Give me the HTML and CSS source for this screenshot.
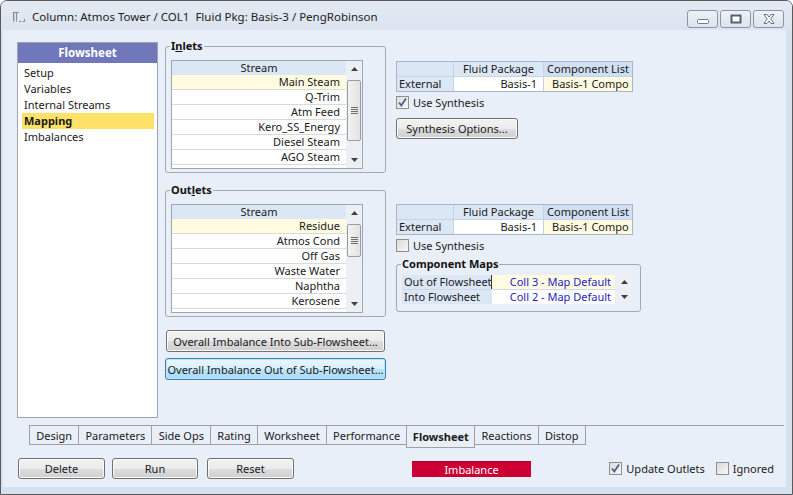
FILE: index.html
```html
<!DOCTYPE html>
<html>
<head>
<meta charset="utf-8">
<title>Column: Atmos Tower</title>
<link rel="stylesheet" href="styles.css">
</head>
<body>
<div class="window">
  <div class="titlebar">
    <svg class="app-icon" width="14" height="12" viewBox="0 0 14 12">
      <path d="M1.5 1 V10.5 M4.5 1 V10.5 M1.5 1.5 H4.5 M4.5 1.5 H7" stroke="#8a8a8a" stroke-width="1" fill="none"/>
      <path d="M7 10.5 H9 M10.5 10.5 H12.5 M12.5 8 V10.5" stroke="#8a8a8a" stroke-width="1" fill="none"/>
      <path d="M2.5 2 V10" stroke="#c8c8c8" stroke-width="1"/>
    </svg>
    <span class="title">Column: Atmos Tower / COL1&nbsp; Fluid Pkg: Basis-3 / PengRobinson</span>
    <div class="wbtns">
      <div class="wbtn"><svg width="12" height="12" viewBox="0 0 12 12"><rect x="0.5" y="6.5" width="11" height="4" rx="1" fill="#fff" stroke="#707a88"/></svg></div>
      <div class="wbtn"><svg width="12" height="10" viewBox="0 0 12 10"><rect x="1.5" y="1.5" width="9" height="7" fill="#fff" stroke="#5b6370" stroke-width="2"/><rect x="3.5" y="4" width="5" height="2" fill="#fff"/></svg></div>
      <div class="wbtn"><svg width="14" height="12" viewBox="0 0 14 12"><path d="M2 1.5 L5 1.5 L7 4 L9 1.5 L12 1.5 L8.8 6 L12 10.5 L9 10.5 L7 8 L5 10.5 L2 10.5 L5.2 6 Z" fill="#fff" stroke="#6c7482" stroke-width="1" stroke-linejoin="round"/></svg></div>
    </div>
  </div>

  <div class="client">
    <div class="main">
      <div class="nav">
        <div class="nav-head">Flowsheet</div>
        <ul class="nav-list">
          <li>Setup</li>
          <li>Variables</li>
          <li>Internal Streams</li>
          <li class="current">Mapping</li>
          <li>Imbalances</li>
        </ul>
      </div>

      <div class="page">
        <div class="section">
          <fieldset class="group streams">
            <legend>I<u>n</u>lets</legend>
            <div class="grid">
              <div class="grid-body">
                <div class="ghead">Stream</div>
                <div class="grow sel">Main Steam</div>
                <div class="grow">Q-Trim</div>
                <div class="grow">Atm Feed</div>
                <div class="grow">Kero_SS_Energy</div>
                <div class="grow">Diesel Steam</div>
                <div class="grow">AGO Steam</div>
              </div>
              <div class="vscroll">
                <div class="sarrow"><svg width="7" height="4" viewBox="0 0 7 4"><path d="M0 4 L3.5 0 L7 4 Z" fill="#404040"/></svg></div>
                <div class="strack"><div class="sthumb"><span class="grip"></span></div></div>
                <div class="sarrow"><svg width="7" height="4" viewBox="0 0 7 4"><path d="M0 0 L3.5 4 L7 0 Z" fill="#404040"/></svg></div>
              </div>
            </div>
          </fieldset>
          <div class="side side-in">
            <div class="pkg">
              <div class="pc"></div>
              <div class="pc ctr">Fluid Package</div>
              <div class="pc ctr cl">Component List</div>
              <div class="pc">External</div>
              <div class="pc num">Basis-1</div>
              <div class="pc cream">Basis-1 Compo</div>
            </div>
            <label class="chk"><span class="box"><svg width="11" height="11" viewBox="0 0 11 11"><path d="M2 5.5 L4.3 8.5 L9 1.5" stroke="#4b5f8c" stroke-width="1.8" fill="none"/></svg></span>Use Synthesis</label>
            <button class="btn syn">Synthesis Options...</button>
          </div>
        </div>

        <div class="section outlets">
          <fieldset class="group streams">
            <legend>Out<u>l</u>ets</legend>
            <div class="grid">
              <div class="grid-body">
                <div class="ghead">Stream</div>
                <div class="grow sel">Residue</div>
                <div class="grow">Atmos Cond</div>
                <div class="grow">Off Gas</div>
                <div class="grow">Waste Water</div>
                <div class="grow">Naphtha</div>
                <div class="grow">Kerosene</div>
              </div>
              <div class="vscroll">
                <div class="sarrow"><svg width="7" height="4" viewBox="0 0 7 4"><path d="M0 4 L3.5 0 L7 4 Z" fill="#404040"/></svg></div>
                <div class="strack"><div class="sthumb short"><span class="grip"></span></div></div>
                <div class="sarrow"><svg width="7" height="4" viewBox="0 0 7 4"><path d="M0 0 L3.5 4 L7 0 Z" fill="#404040"/></svg></div>
              </div>
            </div>
          </fieldset>
          <div class="side side-out">
            <div class="pkg">
              <div class="pc"></div>
              <div class="pc ctr">Fluid Package</div>
              <div class="pc ctr cl">Component List</div>
              <div class="pc">External</div>
              <div class="pc num">Basis-1</div>
              <div class="pc cream">Basis-1 Compo</div>
            </div>
            <label class="chk"><span class="box"></span>Use Synthesis</label>
            <fieldset class="group maps">
              <legend>Component Maps</legend>
              <div class="mapgrid">
                <div class="mapcells">
                  <div class="mrow"><span class="mlabel focus">Out of Flowsheet</span><span class="mval cream">Coll 3 - Map Default</span></div>
                  <div class="mrow"><span class="mlabel">Into Flowsheet</span><span class="mval">Coll 2 - Map Default</span></div>
                </div>
                <div class="mscroll">
                  <div class="marrow"><svg width="7" height="4" viewBox="0 0 7 4"><path d="M0 4 L3.5 0 L7 4 Z" fill="#404040"/></svg></div>
                  <div class="marrow"><svg width="7" height="4" viewBox="0 0 7 4"><path d="M0 0 L3.5 4 L7 0 Z" fill="#404040"/></svg></div>
                </div>
              </div>
            </fieldset>
          </div>
        </div>

        <div class="imb-buttons">
          <button class="btn into">Overall Imbalance Into Sub-Flowsheet...</button>
          <button class="btn outof focused">Overall Imbalance Out of Sub-Flowsheet...</button>
        </div>
      </div>
    </div>

    <div class="tabs">
      <div class="tab first">Design</div>
      <div class="tab">Parameters</div>
      <div class="tab">Side Ops</div>
      <div class="tab">Rating</div>
      <div class="tab">Worksheet</div>
      <div class="tab">Performance</div>
      <div class="tab active">Flowsheet</div>
      <div class="tab">Reactions</div>
      <div class="tab">Distop</div>
    </div>

    <div class="footer">
      <button class="btn fbtn del">Delete</button>
      <button class="btn fbtn run">Run</button>
      <button class="btn fbtn reset">Reset</button>
      <div class="imbalance">Imbalance</div>
      <label class="chk upd"><span class="box"><svg width="11" height="11" viewBox="0 0 11 11"><path d="M2 5.5 L4.3 8.5 L9 1.5" stroke="#4b5f8c" stroke-width="1.8" fill="none"/></svg></span>Update Outlets</label>
      <label class="chk ign"><span class="box"></span>Ignored</label>
    </div>
  </div>
</div>
</body>
</html>
```

FILE: styles.css
```css
* { box-sizing: border-box; }
html, body { margin: 0; padding: 0; }
body {
  width: 793px;
  height: 495px;
  overflow: hidden;
  background: #ffffff;
  font-family: "Noto Sans", "Open Sans", sans-serif;
  font-size: 11px;
  color: #1a1a1a;
}

.window {
  width: 793px;
  height: 495px;
  border: 1px solid #5a5a5a;
  border-radius: 7px 7px 0 0;
  background: #d5e1ef;
  display: flex;
  flex-direction: column;
}

/* title bar */
.titlebar {
  height: 29px;
  flex: none;
  display: flex;
  align-items: center;
  padding-left: 11px;
  border-radius: 6px 6px 0 0;
  background: linear-gradient(#e3eaf3, #dbe4ef);
}
.app-icon { flex: none; margin-top: 2px; }
.title {
  margin-left: 6px;
  font-size: 11.5px;
  color: #222;
  margin-top: 1px;
}
.wbtns {
  margin-left: auto;
  margin-right: 8px;
  align-self: flex-start;
  margin-top: 9px;
  display: flex;
  gap: 2px;
}
.wbtn {
  width: 31px;
  height: 18px;
  border: 1px solid #8996ab;
  border-radius: 3px;
  background: linear-gradient(#eef2f7, #dde4ee);
  display: flex;
  align-items: center;
  justify-content: center;
}

/* client */
.client {
  flex: 1;
  margin: 0 6px 7px 2px;
  background: #e9eff8;
  padding: 9px 0 0 14px;
  display: flex;
  flex-direction: column;
}
.main {
  height: 386px;
  flex: none;
  display: flex;
  align-items: flex-start;
  gap: 7px;
}

/* nav */
.nav {
  margin-top: 3px;
  width: 141px;
  height: 376px;
  border: 1px solid #a0a4aa;
  background: #ffffff;
}
.nav-head {
  height: 20px;
  background: #7077bb;
  color: #ffffff;
  font-weight: bold;
  text-align: center;
  line-height: 20px;
  font-size: 11.5px;
}
.nav-list {
  list-style: none;
  margin: 0;
  padding: 2px 3px 0 4px;
}
.nav-list li {
  height: 16px;
  line-height: 16px;
  padding-left: 2px;
}
.nav-list li.current {
  background: #ffe168;
  font-weight: bold;
}

/* page */
.page {
  display: flex;
  flex-direction: column;
}
.section {
  display: flex;
  align-items: flex-start;
  gap: 10px;
}
.section.outlets { margin-top: 10px; }

fieldset.group {
  margin: 0;
  padding: 7px 5px 3px 5px;
  border: 1px solid #a3a9b2;
  border-radius: 3px;
  min-width: 0;
}
fieldset.group legend {
  padding: 0 1px;
  margin-left: -1px;
  font-weight: bold;
  line-height: 14px;
  color: #111;
}
fieldset.streams { width: 221px; }

/* stream grid */
.grid {
  width: 192px;
  height: 109px;
  border: 1px solid #a0a6ad;
  background: #ffffff;
  display: flex;
}
.grid-body { width: 174px; }
.ghead {
  height: 14px;
  line-height: 14px;
  background: #dce7f6;
  text-align: center;
}
.grow {
  height: 15px;
  line-height: 14px;
  border-bottom: 1px solid #dadada;
  text-align: right;
  padding-right: 6px;
}
.grow.sel { background: #fffbe1; }

.vscroll {
  width: 16px;
  background: #eceff3;
  display: flex;
  flex-direction: column;
}
.sarrow {
  height: 16px;
  display: flex;
  align-items: center;
  justify-content: center;
}
.strack {
  flex: 1;
  padding: 3px 1px 0 1px;
}
.sthumb {
  height: 61px;
  border: 1px solid #9a9da2;
  border-radius: 2px;
  background: linear-gradient(90deg, #f3f3f3, #e2e2e2);
  display: flex;
  align-items: center;
  justify-content: center;
}
.sthumb.short { height: 33px; }
.grip {
  width: 7px;
  height: 7px;
  background: repeating-linear-gradient(#6f6f6f 0 1px, transparent 1px 2px);
}

/* side tables */
.side { display: flex; flex-direction: column; align-items: flex-start; }
.side-in { margin-top: 22px; }
.side-out { margin-top: 21px; }

.pkg {
  display: grid;
  grid-template-columns: 56px 89px 88px;
  grid-template-rows: 14px 14px;
  gap: 1px;
  border: 1px solid #aab6c6;
  background: #c6d3e6;
}
.pc {
  background: #dce7f6;
  line-height: 14px;
  padding: 0 2px;
  white-space: nowrap;
  overflow: hidden;
}
.pc.ctr { text-align: center; padding: 0; }
.pc.cl { background: #d0dff2; }
.pc.num { background: #ffffff; text-align: right; padding-right: 6px; }
.pc.cream { background: #fffbe1; padding-left: 8px; }

.chk {
  display: flex;
  align-items: center;
  gap: 4px;
  height: 14px;
}
.side .chk { margin-top: 3px; }
.box {
  width: 13px;
  height: 13px;
  border: 1px solid #8e8f91;
  background: linear-gradient(135deg, #dcdcdc, #f7f7f7);
  display: flex;
  align-items: center;
  justify-content: center;
}

.btn {
  font-family: inherit;
  font-size: 11px;
  color: #1a1a1a;
  height: 21px;
  padding: 0;
  border: 1px solid #707070;
  border-radius: 3px;
  background: linear-gradient(#f2f2f2 0%, #ebebeb 50%, #dddddd 51%, #cfcfcf 100%);
  box-shadow: inset 0 0 0 1px #fbfbfb;
}
.btn.syn { width: 122px; margin-top: 9px; }
.btn.focused {
  border-color: #3c7fb1;
  background: linear-gradient(#eaf6fd 0%, #d9f0fc 50%, #bee6fd 51%, #a7d9f5 100%);
  box-shadow: inset 0 0 0 1px #bde6f9;
}

/* component maps */
fieldset.maps {
  width: 245px;
  margin-top: 5px;
  padding: 4px 7px 7px 5px;
}
.mapgrid {
  width: 231px;
  height: 29px;
  display: flex;
  background: #ffffff;
}
.mapcells { width: 213px; }
.mrow {
  height: 14px;
  display: flex;
  line-height: 14px;
}
.mrow + .mrow { border-top: 1px solid #cfd9e6; height: 15px; }
.mlabel {
  width: 90px;
  background: #dce7f6;
  padding-left: 2px;
  white-space: nowrap;
  overflow: hidden;
}
.mlabel.focus { border-right: 1px solid #333; }
.mval {
  flex: 1;
  text-align: right;
  padding-right: 4px;
  color: #2424c8;
  background: #ffffff;
}
.mval.cream { background: #fffbe1; }
.mscroll {
  flex: 1;
  background: #eceff3;
  display: flex;
  flex-direction: column;
}
.marrow {
  flex: 1;
  display: flex;
  align-items: center;
  justify-content: center;
}

/* imbalance buttons */
.imb-buttons {
  margin-top: 13px;
  display: flex;
  flex-direction: column;
  align-items: flex-start;
  gap: 6px;
}
.btn.into { width: 219px; margin-left: 1px; height: 22px; }
.btn.outof { width: 221px; height: 22px; }

/* tabs */
.tabs {
  height: 23px;
  flex: none;
  margin: 0 2px 0 12px;
  border-top: 1px solid #a0a0a0;
  display: flex;
  align-items: flex-start;
}
.tab {
  height: 20px;
  line-height: 19px;
  padding: 0 6.2px;
  border-right: 1px solid #a0a0a0;
  border-bottom: 1px solid #a0a0a0;
  margin-top: -1px;
  border-top: 1px solid #a0a0a0;
  white-space: nowrap;
}
.tab.first { border-left: 1px solid #a0a0a0; }
.tab.active {
  height: 23px;
  font-weight: bold;
  border-left: 1px solid #a0a0a0;
  margin-left: -1px;
  padding: 0 5.5px;
  line-height: 21px;
}

/* footer */
.footer {
  margin-top: 10px;
  height: 21px;
  display: flex;
  align-items: center;
}
.fbtn { width: 87px; }
.fbtn.del { margin-left: 1px; }
.fbtn.run { margin-left: 7px; width: 86px; }
.fbtn.reset { margin-left: 9px; }
.imbalance {
  margin-left: 118px;
  width: 119px;
  height: 16px;
  line-height: 16px;
  background: #cc0033;
  color: #ffffff;
  text-align: center;
  border-top: 1px solid #a8002a;
}
.chk.upd { margin-left: auto; }
.chk.ign { margin-left: 11px; margin-right: 12px; }
```
